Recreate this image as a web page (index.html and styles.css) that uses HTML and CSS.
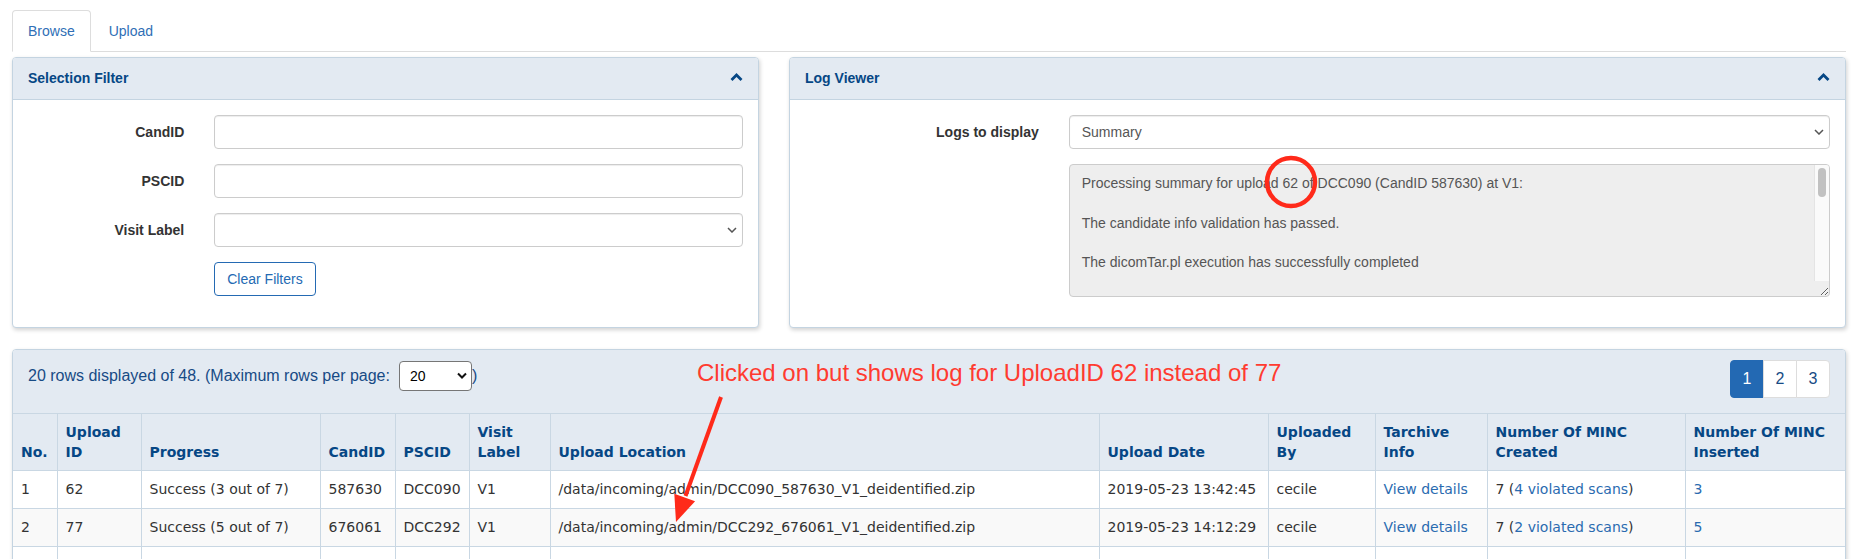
FILE: index.html
```html
<!DOCTYPE html>
<html lang="en">
<head>
<meta charset="utf-8">
<title>Imaging Uploader</title>
<link rel="stylesheet" href="styles.css">
</head>
<body>
<div class="page">
  <ul class="tabs">
    <li class="tab active"><a href="#">Browse</a></li>
    <li class="tab"><a href="#">Upload</a></li>
  </ul>

  <div class="top-row">
    <section class="panel">
      <div class="panel-heading">
        <span class="panel-title">Selection Filter</span>
        <svg class="chev" viewBox="0 0 13 8"><polyline points="1.5,7 6.5,2 11.5,7"/></svg>
      </div>
      <div class="panel-body">
        <div class="form-row">
          <label class="form-label">CandID</label>
          <div class="form-field"><input class="form-control" type="text"></div>
        </div>
        <div class="form-row">
          <label class="form-label">PSCID</label>
          <div class="form-field"><input class="form-control" type="text"></div>
        </div>
        <div class="form-row">
          <label class="form-label">Visit Label</label>
          <div class="form-field"><select class="form-control select"><option></option></select></div>
        </div>
        <div class="form-row">
          <span></span>
          <div class="form-field"><button class="btn-outline" type="button">Clear Filters</button></div>
        </div>
      </div>
    </section>

    <section class="panel">
      <div class="panel-heading">
        <span class="panel-title">Log Viewer</span>
        <svg class="chev" viewBox="0 0 13 8"><polyline points="1.5,7 6.5,2 11.5,7"/></svg>
      </div>
      <div class="panel-body">
        <div class="form-row">
          <label class="form-label">Logs to display</label>
          <div class="form-field"><select class="form-control select"><option>Summary</option></select></div>
        </div>
        <div class="form-row last">
          <span></span>
          <div class="form-field">
            <div class="log-wrap">
              <textarea class="log" readonly>Processing summary for upload 62 of DCC090 (CandID 587630) at V1:

The candidate info validation has passed.

The dicomTar.pl execution has successfully completed

      The tarchive file was successfully inserted into the database with TarchiveID 58.

The tarchiveLoader.pl execution has successfully completed

      7 MINC files were created (4 violated scans).

      3 MINC files were inserted into the database.

End of summary.</textarea>
              <div class="scroll-track"><div class="scroll-thumb"></div></div>
            </div>
          </div>
        </div>
      </div>
    </section>
  </div>

  <section class="panel table-panel">
    <div class="table-bar">
      <div class="rows-info">
        <span>20 rows displayed of 48. (Maximum rows per page:</span>
        <select class="per-page"><option>20</option><option>50</option><option>100</option></select>
        <span>)</span>
      </div>
      <nav class="pager">
        <a class="active" href="#">1</a>
        <a href="#">2</a>
        <a href="#">3</a>
      </nav>
    </div>
    <table class="grid">
      <colgroup>
        <col class="c-no"><col class="c-id"><col class="c-prog"><col class="c-cand"><col class="c-psc"><col class="c-visit"><col class="c-loc"><col class="c-date"><col class="c-by"><col class="c-tar"><col class="c-created"><col class="c-inserted">
      </colgroup>
      <thead>
        <tr>
          <th>No.</th><th>Upload<br>ID</th><th>Progress</th><th>CandID</th><th>PSCID</th><th>Visit<br>Label</th><th>Upload Location</th><th>Upload Date</th><th>Uploaded<br>By</th><th>Tarchive<br>Info</th><th>Number Of MINC<br>Created</th><th>Number Of MINC<br>Inserted</th>
        </tr>
      </thead>
      <tbody>
        <tr>
          <td>1</td><td>62</td><td>Success (3 out of 7)</td><td>587630</td><td>DCC090</td><td>V1</td><td>/data/incoming/admin/DCC090_587630_V1_deidentified.zip</td><td>2019-05-23 13:42:45</td><td>cecile</td><td><a href="#">View details</a></td><td>7 (<a href="#">4 violated scans</a>)</td><td><a href="#">3</a></td>
        </tr>
        <tr class="odd">
          <td>2</td><td>77</td><td>Success (5 out of 7)</td><td>676061</td><td>DCC292</td><td>V1</td><td>/data/incoming/admin/DCC292_676061_V1_deidentified.zip</td><td>2019-05-23 14:12:29</td><td>cecile</td><td><a href="#">View details</a></td><td>7 (<a href="#">2 violated scans</a>)</td><td><a href="#">5</a></td>
        </tr>
        <tr>
          <td>3</td><td>78</td><td>Success (9 out of 10)</td><td>676061</td><td>DCC292</td><td>V2</td><td>/data/incoming/admin/DCC292_676061_V2_deidentified.zip</td><td>2019-05-23 14:18:02</td><td>cecile</td><td><a href="#">View details</a></td><td>20 (<a href="#">10 violated scans</a>)</td><td><a href="#">9</a></td>
        </tr>
      </tbody>
    </table>
  </section>

  <div class="annot-text">Clicked on but shows log for UploadID 62 instead of 77</div>
  <svg class="annot" viewBox="0 0 1856 559" width="1856" height="559">
    <circle cx="1291" cy="182" r="24" />
    <line x1="721" y1="397" x2="685.5" y2="496" />
    <polygon points="676,522 695.1,501.2 674.3,493.8" />
  </svg>
</div>
</body>
</html>
```

FILE: styles.css
```css
* { box-sizing: border-box; }
html, body { margin: 0; padding: 0; background: #fff; }
body {
  font-family: "Liberation Sans", Arial, Helvetica, sans-serif;
  font-size: 14px;
  line-height: 20px;
  color: #333;
}
.page {
  position: relative;
  width: 1856px;
  height: 559px;
  overflow: hidden;
  padding: 10px 10px 0 12px;
}

/* Tabs */
.tabs {
  display: flex;
  list-style: none;
  margin: 0;
  padding: 0;
  border-bottom: 1px solid #ddd;
}
.tab { margin-right: 2px; margin-bottom: -1px; }
.tab a {
  display: block;
  padding: 10px 15px;
  line-height: 20px;
  border: 1px solid transparent;
  border-radius: 4px 4px 0 0;
  color: #2f6fb6;
  text-decoration: none;
}
.tab.active a { border-color: #ddd #ddd transparent; background: #fff; }

/* Panels */
.top-row {
  display: grid;
  grid-template-columns: 747px 1fr;
  column-gap: 30px;
  margin-top: 5px;
}
.panel {
  border: 1px solid #c4d4e1;
  border-radius: 4px;
  background: #fff;
  box-shadow: 1px 2px 4px rgba(0, 0, 0, 0.18);
}
.panel-heading {
  display: flex;
  justify-content: space-between;
  align-items: center;
  padding: 10px 15px;
  line-height: 21px;
  background: #e3eaf2;
  border-bottom: 1px solid #c4d4e1;
  border-radius: 3px 3px 0 0;
}
.panel-title { font-weight: bold; color: #064785; font-size: 14px; }
.chev { width: 13px; height: 8px; margin-top: -4px; }
.chev polyline { fill: none; stroke: #064785; stroke-width: 2.8; }
.panel-body { padding: 15px 0; }

.form-row {
  display: grid;
  grid-template-columns: 25% 75%;
  align-items: center;
  margin-bottom: 15px;
}
.form-label {
  text-align: right;
  padding-right: 15px;
  font-weight: bold;
  color: #333;
}
.form-field { padding: 0 15px; }
.form-control {
  display: block;
  width: 100%;
  height: 34px;
  padding: 6px 12px;
  font: 14px/20px "Liberation Sans", Arial, sans-serif;
  color: #555;
  background: #fff;
  border: 1px solid #ccc;
  border-radius: 4px;
  box-shadow: inset 0 1px 1px rgba(0, 0, 0, 0.075);
}
.select {
  appearance: none;
  -webkit-appearance: none;
  background-image: url("data:image/svg+xml;utf8,<svg xmlns='http://www.w3.org/2000/svg' width='10' height='6' viewBox='0 0 10 6'><polyline points='1,1 5,5 9,1' fill='none' stroke='%23555' stroke-width='1.5'/></svg>");
  background-repeat: no-repeat;
  background-position: right 5px center;
  background-size: 10px 6px;
}
.btn-outline {
  height: 34px;
  padding: 6px 12px;
  font: 14px/20px "Liberation Sans", Arial, sans-serif;
  color: #246ab3;
  background: #fff;
  border: 1px solid #246ab3;
  border-radius: 4px;
}
.log-wrap { position: relative; }
.log {
  display: block;
  width: 100%;
  height: 133px;
  padding: 9px 28px 9px 12px;
  font: 14px/19.75px "Liberation Sans", Arial, sans-serif;
  color: #555;
  background: #eee;
  border: 1px solid #ccc;
  border-radius: 4px;
  resize: vertical;
  overflow: hidden;
  white-space: pre-wrap;
}
.scroll-track {
  position: absolute;
  top: 1px;
  right: 1px;
  bottom: 16px;
  width: 15px;
  background: #fafafa;
  border-left: 1px solid #e4e4e4;
  border-radius: 0 3px 0 0;
}
.scroll-thumb {
  margin: 3px 0 0 3px;
  width: 8px;
  height: 29px;
  border-radius: 4px;
  background: #c1c1c1;
}

/* Table panel */
.table-panel { margin-top: 21px; }
.table-bar {
  display: flex;
  justify-content: space-between;
  align-items: flex-start;
  padding: 10px 15px 15px;
  background: #e3eaf2;
  border-radius: 3px 3px 0 0;
}
.rows-info {
  display: flex;
  align-items: center;
  height: 31px;
  font-size: 16px;
  color: #174b85;
}
.per-page {
  width: 73px;
  height: 30px;
  margin-left: 9px;
  padding: 0 10px;
  font: 14px "Liberation Sans", Arial, sans-serif;
  color: #000;
  background: #fff;
  border: 1px solid #767676;
  border-radius: 4px;
  appearance: none;
  -webkit-appearance: none;
  background-image: url("data:image/svg+xml;utf8,<svg xmlns='http://www.w3.org/2000/svg' width='10' height='7' viewBox='0 0 10 7'><polyline points='1,1.5 5,5.5 9,1.5' fill='none' stroke='%23111' stroke-width='2'/></svg>");
  background-repeat: no-repeat;
  background-position: right 4px center;
  background-size: 10px 7px;
}
.pager { display: flex; }
.pager a {
  display: block;
  width: 34px;
  height: 38px;
  line-height: 36px;
  text-align: center;
  font-size: 16px;
  color: #174b85;
  text-decoration: none;
  background: #fff;
  border: 1px solid #ddd;
  margin-left: -1px;
}
.pager a:first-child { border-radius: 4px 0 0 4px; }
.pager a:last-child { border-radius: 0 4px 4px 0; }
.pager a.active { background: #2369b3; border-color: #2369b3; color: #fff; }

.grid {
  width: 100%;
  border-collapse: collapse;
  table-layout: fixed;
  font-family: "DejaVu Sans", Verdana, sans-serif;
  font-size: 14px;
}
.c-no { width: 44px; }
.c-id { width: 84px; }
.c-prog { width: 179px; }
.c-cand { width: 75px; }
.c-psc { width: 74px; }
.c-visit { width: 81px; }
.c-loc { width: 549px; }
.c-date { width: 169px; }
.c-by { width: 107px; }
.c-tar { width: 112px; }
.c-created { width: 198px; }
.c-inserted { width: 160px; }
.grid th, .grid td {
  border: 1px solid #c9d7e3;
  padding: 8px;
  text-align: left;
  white-space: nowrap;
  overflow: hidden;
}
.grid th:first-child, .grid td:first-child { border-left: 0; }
.grid th:last-child, .grid td:last-child { border-right: 0; }
.grid th {
  background: #e3eaf2;
  color: #064785;
  font-weight: bold;
  vertical-align: bottom;
  line-height: 20px;
}
.grid td { line-height: 21px; color: #333; background: #fff; }
.grid tr.odd td { background: #f9f9f9; }
.grid a { color: #2a6bb0; text-decoration: none; }

/* Annotations */
.annot-text {
  position: absolute;
  left: 697px;
  top: 359px;
  font-size: 24px;
  line-height: 28px;
  color: #ff3b30;
  white-space: nowrap;
}
.annot {
  position: absolute;
  left: 0;
  top: 0;
  pointer-events: none;
}
.annot circle { fill: none; stroke: #ff2a1a; stroke-width: 4.5; }
.annot line { stroke: #ff2a1a; stroke-width: 4; }
.annot polygon { fill: #ff2a1a; }
```
